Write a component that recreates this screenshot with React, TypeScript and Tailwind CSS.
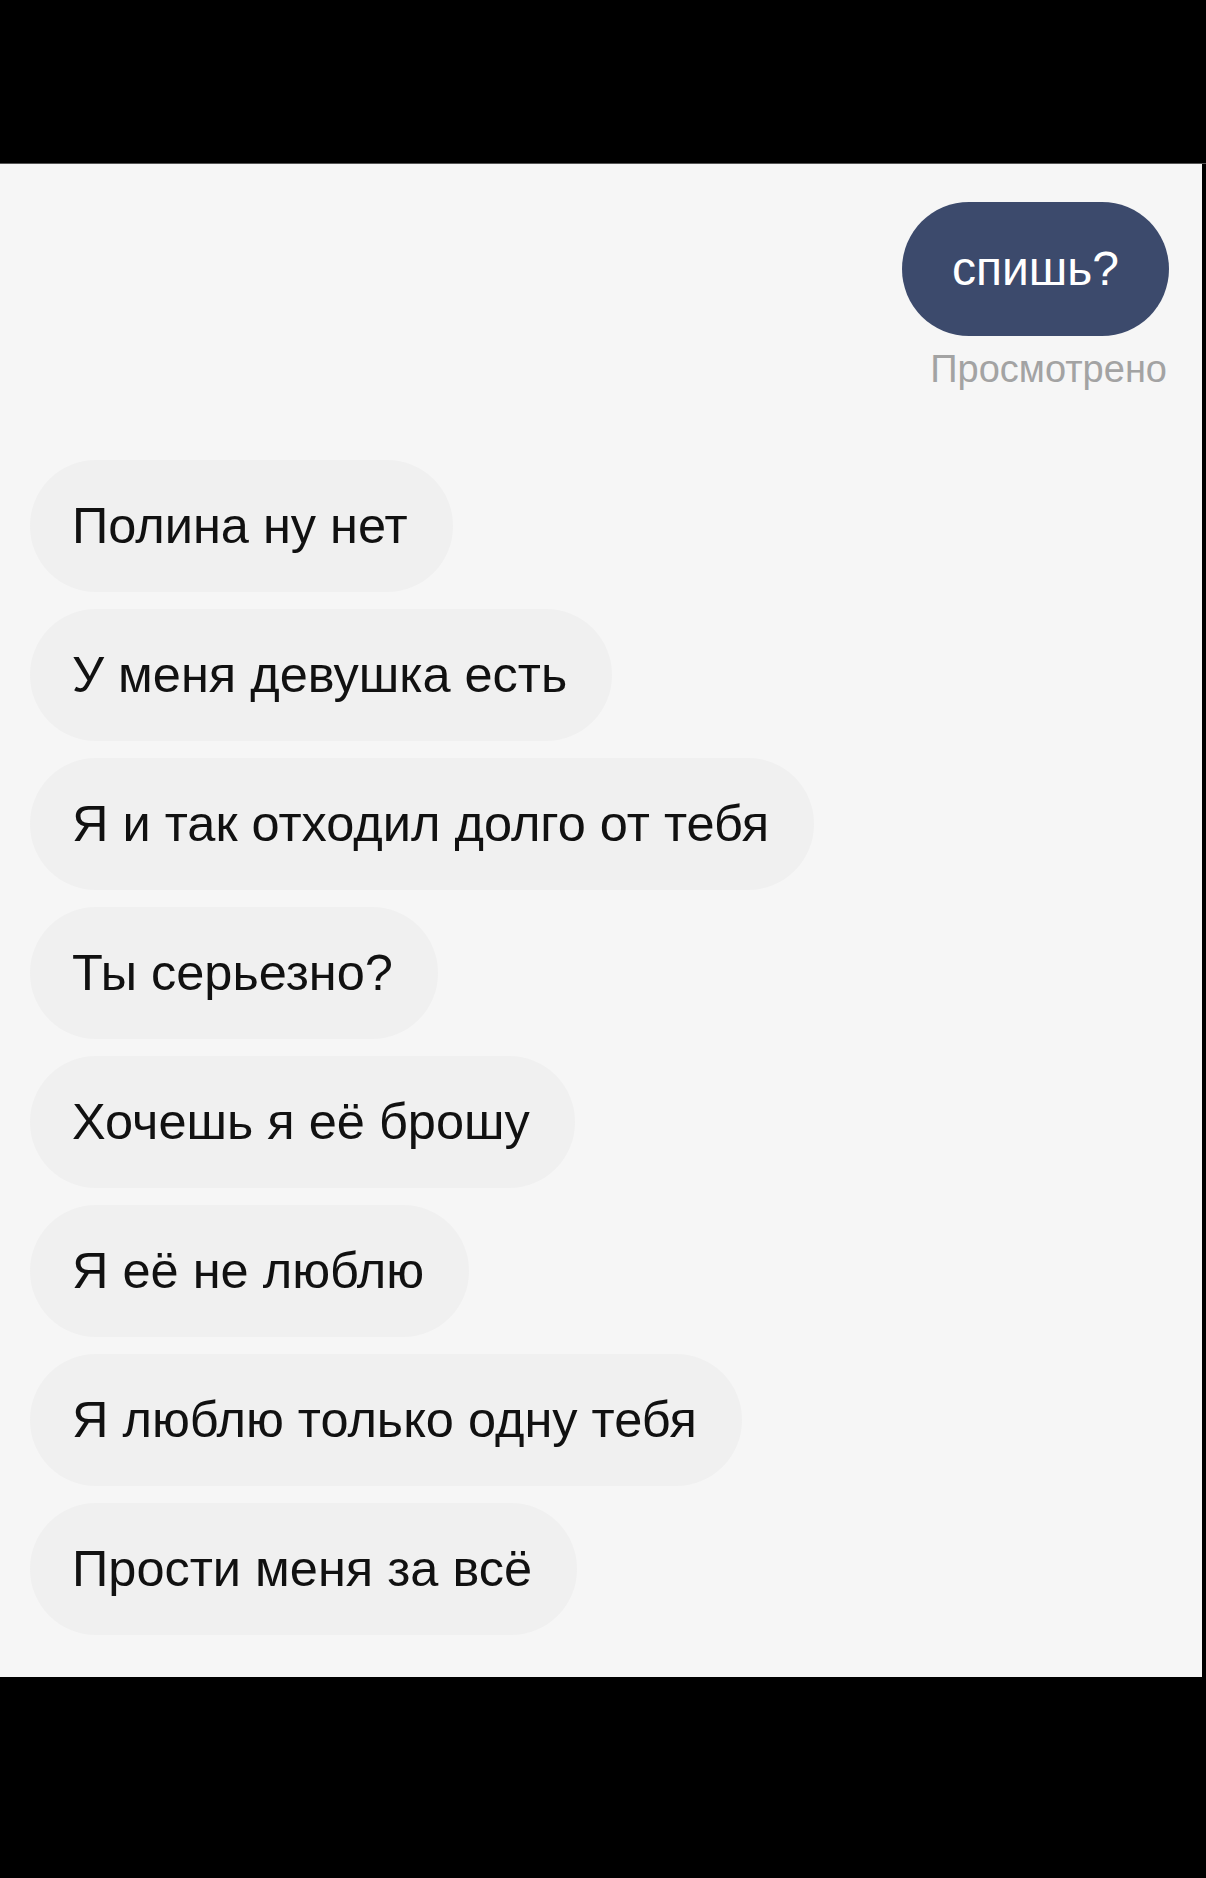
import React from 'react';

const messages = [
	'Полина ну нет',
	'У меня девушка есть',
	'Я и так отходил долго от тебя',
	'Ты серьезно?',
	'Хочешь я её брошу',
	'Я её не люблю',
	'Я люблю только одну тебя',
	'Прости меня за всё',
];

const Bubble = ({ text }: { text: string }) => {
	return (
		<div className="self-start ml-[30px] h-[132px] flex items-center pl-[42px] pr-[45px] rounded-full bg-[#f0f0f0] text-[50.5px] text-[#111111] whitespace-nowrap">
			{text}
		</div>
	);
};

export default function App() {
	return (
		<div
			className="w-[1206px] h-[1878px] bg-black flex flex-col"
			style={{ fontFamily: '"Liberation Sans", Arial, sans-serif' }}
		>
			<div className="h-[164px] border-b border-[#555555]" />
			<div className="flex h-[1513px]">
				<div className="w-[1202px] bg-[#f6f6f6] flex flex-col pt-[38px]">
					{/* sent */}
					<div className="self-end mr-[33px] h-[134px] flex items-center px-[50px] rounded-full bg-[#3c4a6c] text-[48px] text-white">
						спишь?
					</div>
					<div className="self-end mr-[35px] mt-[13px] text-[38px] leading-[41px] text-[#a3a3a3]">
						Просмотрено
					</div>

					{/* received */}
					<div className="flex flex-col gap-[17px] mt-[70px]">
						{messages.map((m) => (
							<Bubble key={m} text={m} />
						))}
					</div>
				</div>
				<div className="w-[4px] bg-black" />
			</div>
			<div className="flex-1 bg-black" />
		</div>
	);
}
